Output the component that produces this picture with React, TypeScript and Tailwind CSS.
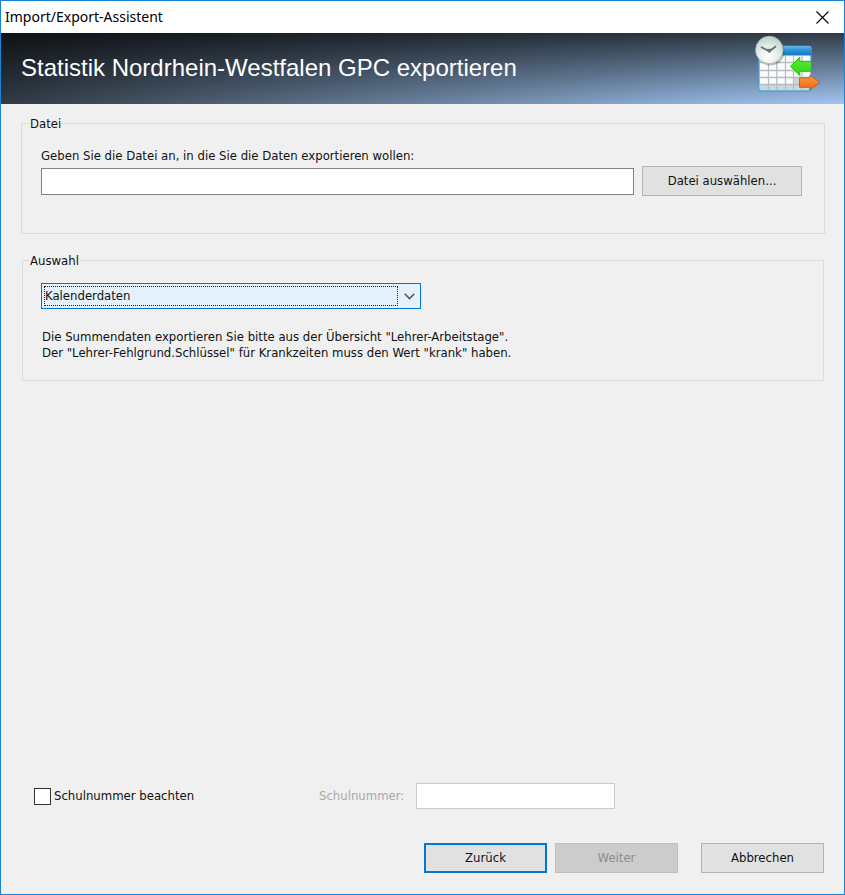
import { useId, type ButtonHTMLAttributes, type ReactNode } from "react";

function CalendarTransferIcon() {
  const id = useId();
  return (
    <svg width="68" height="60" viewBox="0 0 68 60" aria-hidden="true" className="mt-0.5 shrink-0 self-start">
      <defs>
        <linearGradient id={`${id}bar`} x1="0" y1="0" x2="0" y2="1">
          <stop offset="0" stopColor="#6fb8e8" />
          <stop offset="0.4" stopColor="#2f95dc" />
          <stop offset="1" stopColor="#1277c2" />
        </linearGradient>
        <radialGradient id={`${id}face`} cx="0.45" cy="0.75" r="0.8">
          <stop offset="0" stopColor="#ffffff" />
          <stop offset="0.5" stopColor="#e0ede7" />
          <stop offset="1" stopColor="#b5cbc2" />
        </radialGradient>
        <linearGradient id={`${id}green`} x1="0" y1="0" x2="0" y2="1">
          <stop offset="0" stopColor="#58e83a" />
          <stop offset="1" stopColor="#2bdc10" />
        </linearGradient>
        <linearGradient id={`${id}orange`} x1="0" y1="0" x2="0" y2="1">
          <stop offset="0" stopColor="#ff9a4a" />
          <stop offset="1" stopColor="#f0660c" />
        </linearGradient>
      </defs>
      <rect x="4" y="11.500" width="52" height="44.500" rx="2.500" fill="#fbfcfd" stroke="#4a9fd4" strokeWidth="1.400" />
      <path d="M4.700 49.500h50.600v5.500H4.700zM39 42h16.300v8H39z" fill="#c6d9de" />
      <path d="M3.500 20.500V13.500a2.500 2.500 0 0 1 2.500-2.500h48a2.500 2.500 0 0 1 2.500 2.500v7z" fill={`url(#${id}bar)`} />
      <path d="M13.500 21v34M21.800 21v34M30.500 21v34M38.500 21v34M47 21v34M4.700 27.500h50.600M4.700 35.500h50.600M4.700 42.500h50.600M4.700 49.500h50.600" stroke="#b9bcc0" strokeWidth="1.300" />
      <circle cx="15.500" cy="16.500" r="14" fill="#26323c" opacity="0.3" />
      <circle cx="14.300" cy="15" r="13.700" fill={`url(#${id}face)`} stroke="#a9bcb5" strokeWidth="0.900" />
      <path d="M6 12l8.300 4.300 6.700-5" fill="none" stroke="#65736d" strokeWidth="1.900" />
      <path d="M12 14.300l2.300 3.400 2.500-3.400z" fill="#65736d" stroke="#65736d" />
      <path d="M35.500 31.300l9.300-9v4h11.700v10H44.800v4.300z" fill={`url(#${id}green)`} stroke="#22b30f" strokeWidth="0.900" />
      <path d="M65 47.300l-10.200-7v2.500H44.500v9.500h10.300v2.500z" fill={`url(#${id}orange)`} stroke="#b8601c" strokeWidth="0.900" />
    </svg>
  );
}

function Group({ title, className, children }: { title: string; className: string; children: ReactNode }) {
  return (
    <fieldset className={`border border-[#dcdcdc] ${className}`}>
      <legend className="-ml-3 h-5 px-px pt-px leading-5">{title}</legend>
      {children}
    </fieldset>
  );
}

function PushButton({ className, ...rest }: ButtonHTMLAttributes<HTMLButtonElement>) {
  return <button type="button" className={`h-[30px] shrink-0 text-center ${className}`} {...rest} />;
}

export default function App() {
  return (
    <div className="flex min-h-screen flex-col border border-[#1883d7] bg-[#f0f0f0] font-['DejaVu_Sans_Condensed','Open_Sans',sans-serif] text-[13px] leading-4 text-[#111]">
      <div className="flex h-8 items-center justify-between bg-white pr-[15px] pl-1 text-black">
        <span className="font-['Noto_Sans',sans-serif] text-sm">Import/Export-Assistent</span>
        <button type="button" aria-label="Schließen">
          <svg width="13" height="13" viewBox="0 0 13 13" aria-hidden="true">
            <path d="M0.500 0.500l12 12M12.500 0.500l-12 12" stroke="#000" strokeWidth="1.100" />
          </svg>
        </button>
      </div>

      <header className="flex h-[71px] items-center justify-between bg-[linear-gradient(to_bottom,rgba(0,0,0,0.7),rgba(0,0,0,0)),linear-gradient(to_right,#303a45,#56697f_33%,#94b8e2_87%,#a2c5f0)] pr-[21px] pb-0.5 pl-5">
        <h1 className="font-['Liberation_Sans',Arial,sans-serif] text-2xl text-white">
          Statistik Nordrhein-Westfalen GPC exportieren
        </h1>
        <CalendarTransferIcon />
      </header>

      <main className="flex grow flex-col pt-[9px] pr-[19px] pb-[21px] pl-5">
        <Group title="Datei" className="h-[121px] pr-[22px] pl-[19px]">
          <label htmlFor="datei" className="mt-[15px] block">
            Geben Sie die Datei an, in die Sie die Daten exportieren wollen:
          </label>
          <div className="mt-0.5 flex items-center gap-2">
            <input id="datei" type="text" className="h-[27px] min-w-0 grow border border-[#838383] bg-white px-1 outline-none" />
            <PushButton className="w-40 border border-[#b4b4b4] bg-[#e1e1e1]">Datei auswählen...</PushButton>
          </div>
        </Group>

        <Group title="Auswahl" className="mx-px mt-4 h-[131px] px-[18px]">
          <div className="relative mt-[13px] max-w-[380px]">
            <select
              aria-label="Auswahl"
              defaultValue="Kalenderdaten"
              className="block h-[26px] w-full appearance-none border border-[#0078d7] bg-[#e5f1fb] px-[3px] outline-none"
            >
              <option>Kalenderdaten</option>
            </select>
            <span className="pointer-events-none absolute inset-y-[3px] right-[23px] left-[3px] border border-dotted border-[#222]" />
            <svg width="11" height="7" viewBox="0 0 11 7" aria-hidden="true" className="pointer-events-none absolute top-[10px] right-[6px]">
              <path d="M0.700 0.800l4.800 4.800 4.800-4.800" fill="none" stroke="#555" strokeWidth="1.500" />
            </svg>
          </div>
          <p className="mt-5 pl-px">
            Die Summendaten exportieren Sie bitte aus der Übersicht "Lehrer-Arbeitstage".
            <br />
            Der "Lehrer-Fehlgrund.Schlüssel" für Krankzeiten muss den Wert "krank" haben.
          </p>
        </Group>

        <div className="mt-auto flex items-center pl-[13px]">
          <label className="flex w-[285px] items-center gap-[3px]">
            <input type="checkbox" className="size-[17px] appearance-none border border-[#333] bg-white checked:bg-[#0078d7]" />
            Schulnummer beachten
          </label>
          <label htmlFor="schulnummer" className="w-[97px] text-[#a8a8a8]">Schulnummer:</label>
          <input id="schulnummer" type="text" disabled className="h-[26px] w-[199px] border border-[#ccc] bg-white px-1" />
        </div>

        <div className="mt-[34px] flex justify-end pr-px">
          <PushButton className="mr-2 w-[123px] border-2 border-[#0078d7] bg-[#e1e1e1]">Zurück</PushButton>
          <PushButton disabled className="mr-[23px] w-[123px] border border-[#bfbfbf] bg-[#ccc] text-[#8c8c8c]">Weiter</PushButton>
          <PushButton className="w-[123px] border border-[#b4b4b4] bg-[#e1e1e1]">Abbrechen</PushButton>
        </div>
      </main>
    </div>
  );
}
